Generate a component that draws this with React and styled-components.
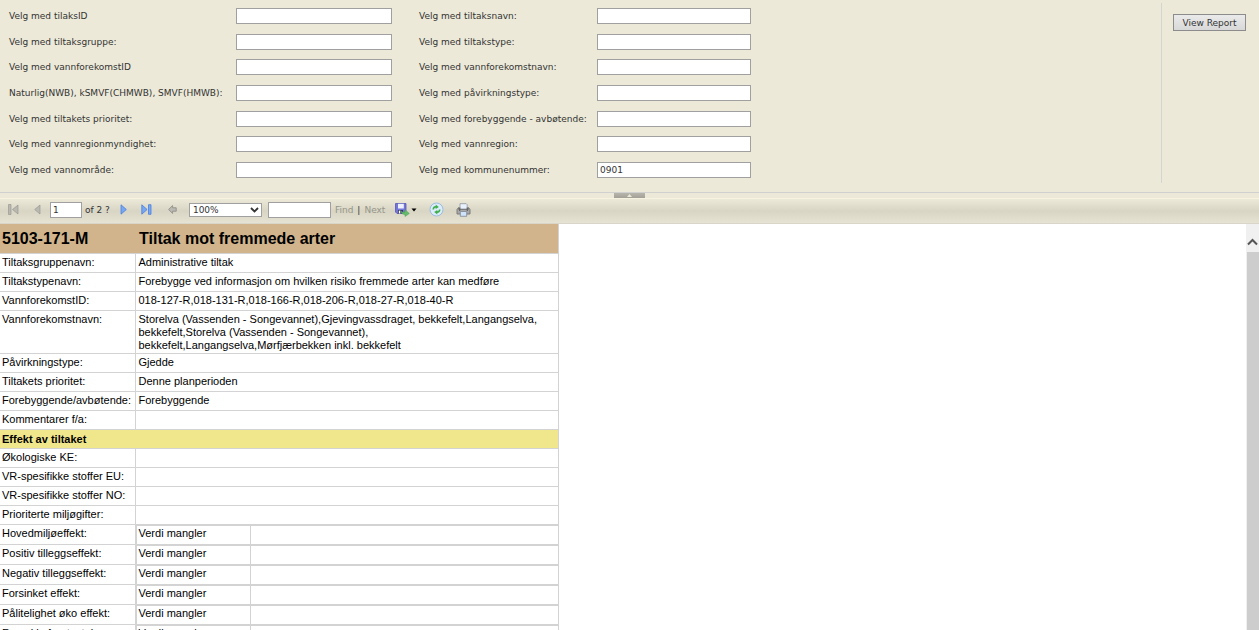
import { Fragment } from 'react';
import styled, { createGlobalStyle } from 'styled-components';

const GlobalStyle = createGlobalStyle`
  * {
    box-sizing: border-box;
  }

  body {
    margin: 0;
    font-family: Verdana, 'DejaVu Sans', sans-serif;
    font-size: 9px;
    color: #333;
    background-color: #fff;
  }

  input, select, button {
    font: inherit;
    color: inherit;
    border-radius: 0;
  }
`;

const Viewer = styled.div`
  display: flex;
  flex-direction: column;
  height: 100vh;
  overflow: hidden;
`;

const ParameterArea = styled.form`
  display: flex;
  flex: none;
  padding: 3px 13px 9px 8px;
  background-color: #ece9d8;
  border-bottom: 1px solid #d0d0d0;
`;

const ParameterGrid = styled.div`
  display: grid;
  flex: 1;
  grid-template-columns: 228px 156px 26px 179px 154px;
  grid-auto-rows: 1fr;
  align-items: center;
  min-height: 180px;
`;

const ParameterLabel = styled.label`
  grid-column: ${(props) => props.$column};
  padding-left: 1px;
  line-height: 12px;
  white-space: nowrap;
`;

const TextInput = styled.input`
  width: 100%;
  height: 16px;
  padding: 0 2px;
  border: 1px solid #a0a0a0;
  background-color: #fff;
  outline: none;
`;

const SubmitCell = styled.div`
  display: flex;
  align-items: flex-start;
  padding: 11px 0 0 11px;
  border-left: 1px solid #d4d4d0;
`;

const ReportButton = styled.button`
  width: 73px;
  height: 17px;
  padding: 0;
  border: 1px solid #8c8c8c;
  background: linear-gradient(#eaeaea, #d8d8d8);
  white-space: nowrap;
`;

const Splitter = styled.div`
  display: flex;
  flex: none;
  justify-content: center;
  height: 6px;
  background-color: #ece9d8;
  border-bottom: 1px solid #f6f3e0;
`;

const SplitterButton = styled.button`
  display: flex;
  align-items: center;
  justify-content: center;
  width: 31px;
  height: 5px;
  padding: 0;
  border: 0;
  background: linear-gradient(#b8b5ac, #a3a098);
`;

const Toolbar = styled.div`
  display: flex;
  flex: none;
  align-items: center;
  height: 25px;
  padding: 0 8px 3px;
  background: linear-gradient(#ece9d8, #d8d5c4 50%, #e6e3d4);
  border-bottom: 1px solid #d8d6c8;
`;

const ToolGroup = styled.div`
  display: flex;
  align-items: center;
  gap: ${(props) => props.$gap || 0}px;
  margin-right: ${(props) => props.$after || 0}px;
`;

const IconButton = styled.button`
  display: flex;
  align-items: center;
  padding: 0;
  border: 0;
  background: none;
`;

const ToolInput = styled(TextInput)`
  width: ${(props) => props.$width}px;
`;

const SelectBox = styled.div`
  display: grid;
  align-items: center;
  width: 73px;
  background-color: #fff;

  > * {
    grid-area: 1 / 1;
  }

  svg {
    justify-self: end;
    margin-right: 3px;
    pointer-events: none;
  }
`;

const ZoomSelect = styled.select`
  width: 100%;
  height: 14px;
  padding: 0 3px;
  border: 1px solid #a0a0a0;
  background: none;
  appearance: none;
`;

const FindLink = styled.a`
  color: #969589;
  text-decoration: none;
`;

const ReportPane = styled.div`
  display: flex;
  flex: 1;
  min-height: 0;
`;

const ReportBody = styled.main`
  flex: 1;
  overflow: hidden;
`;

const ReportTable = styled.table`
  width: 559px;
  table-layout: fixed;
  border-collapse: collapse;
  font-family: Arial, 'Liberation Sans', sans-serif;
  font-size: 11px;
  line-height: 13px;
  color: #000;
`;

const LabelColumn = styled.col`
  width: 135px;
`;

const ReportTitle = styled.th`
  height: 29px;
  padding: 1px 2px 0;
  background-color: #d2b48c;
  font-size: 16px;
  line-height: 18px;
  text-align: left;

  & + & {
    padding-left: 4px;
    border-right: 1px solid #d3d3d3;
  }
`;

const NameCell = styled.th`
  height: ${(props) => (props.$nested ? 20 : 19)}px;
  padding: 2px 0 1px 2px;
  border: 1px solid #d3d3d3;
  border-left: 0;
  font-weight: normal;
  text-align: left;
  vertical-align: top;
  white-space: nowrap;
`;

const ValueCell = styled.td`
  padding: ${(props) => (props.$nested ? '0' : '2px 2px 1px 3px')};
  border: 1px solid #d3d3d3;
  vertical-align: top;
`;

const SectionCell = styled.th`
  height: 19px;
  padding: 2px 2px 1px;
  border: 1px solid #d3d3d3;
  border-left: 0;
  background-color: #f0e68c;
  text-align: left;
`;

const EffectValue = styled.div`
  display: grid;
  grid-template-columns: 114px 1fr;
  height: 19px;
  border-top: 1px solid #d3d3d3;
  border-left: 1px solid #d3d3d3;

  span {
    padding: 1px 2px;
  }

  span:first-child {
    border-right: 1px solid #d3d3d3;
  }
`;

const ScrollTrack = styled.div`
  display: flex;
  flex: none;
  flex-direction: column;
  width: 13px;
  background-color: #f0f0f0;
`;

const ScrollArrow = styled.button`
  display: flex;
  flex: none;
  align-items: center;
  justify-content: center;
  height: 28px;
  padding: 7px 0 0;
  border: 0;
  background: none;
`;

const ScrollThumb = styled.div`
  flex: 1;
  margin-left: 1px;
  background-color: #cdcdcd;
`;

const parameters = [
  [{ label: 'Velg med tilaksID' }, { label: 'Velg med tiltaksnavn:' }],
  [{ label: 'Velg med tiltaksgruppe:' }, { label: 'Velg med tiltakstype:' }],
  [{ label: 'Velg med vannforekomstID' }, { label: 'Velg med vannforekomstnavn:' }],
  [{ label: 'Naturlig(NWB), kSMVF(CHMWB), SMVF(HMWB):' }, { label: 'Velg med påvirkningstype:' }],
  [{ label: 'Velg med tiltakets prioritet:' }, { label: 'Velg med forebyggende - avbøtende:' }],
  [{ label: 'Velg med vannregionmyndighet:' }, { label: 'Velg med vannregion:' }],
  [{ label: 'Velg med vannområde:' }, { label: 'Velg med kommunenummer:', value: '0901' }],
];

const details = [
  ['Tiltaksgruppenavn:', 'Administrative tiltak'],
  ['Tiltakstypenavn:', 'Forebygge ved informasjon om hvilken risiko fremmede arter kan medføre'],
  ['VannforekomstID:', '018-127-R,018-131-R,018-166-R,018-206-R,018-27-R,018-40-R'],
  [
    'Vannforekomstnavn:',
    'Storelva (Vassenden - Songevannet),Gjevingvassdraget, bekkefelt,Langangselva, bekkefelt,Storelva (Vassenden - Songevannet), bekkefelt,Langangselva,Mørfjærbekken inkl. bekkefelt',
  ],
  ['Påvirkningstype:', 'Gjedde'],
  ['Tiltakets prioritet:', 'Denne planperioden'],
  ['Forebyggende/avbøtende:', 'Forebyggende'],
  ['Kommentarer f/a:', ''],
];

const substances = [
  'Økologiske KE:',
  'VR-spesifikke stoffer EU:',
  'VR-spesifikke stoffer NO:',
  'Prioriterte miljøgifter:',
];

const effects = [
  'Hovedmiljøeffekt:',
  'Positiv tilleggseffekt:',
  'Negativ tilleggseffekt:',
  'Forsinket effekt:',
  'Pålitelighet øko effekt:',
  'Forenkla forutsetning:',
];

function FirstIcon() {
  return (
    <svg width="11" height="11" viewBox="0 0 11 11" fill="#b9b8b1" stroke="#92918b" strokeWidth="0.6">
      <path d="M.5 .5h2.5v10H.5zM10 1v9L4.5 5.5z" />
    </svg>
  );
}

function PreviousIcon() {
  return (
    <svg width="7" height="11" viewBox="0 0 7 11">
      <path d="M6 1v9L.7 5.5z" fill="#b9b8b1" stroke="#92918b" strokeWidth="0.6" />
    </svg>
  );
}

function NextIcon() {
  return (
    <svg width="7" height="11" viewBox="0 0 7 11">
      <path d="M1 .8v9.400l5.300-4.700z" fill="#78a8f4" stroke="#4a7edb" strokeWidth="0.8" />
    </svg>
  );
}

function LastIcon() {
  return (
    <svg width="11" height="11" viewBox="0 0 11 11" fill="#78a8f4" stroke="#4a7edb" strokeWidth="0.8">
      <path d="M.8 .8v9.400l5.300-4.700zM7.500 .7h2.500v9.600H7.500z" />
    </svg>
  );
}

function BackIcon() {
  return (
    <svg width="9" height="9" viewBox="0 0 9 9">
      <path d="M.6 4.500L4.600 .6v2.200h3.600v3.400H4.600v2.200z" fill="#bab9b2" stroke="#96958e" strokeWidth="1" />
    </svg>
  );
}

function ExportIcon() {
  return (
    <svg width="15" height="14" viewBox="0 0 15 14">
      <path d="M.5 .5h10.500v10H2L.5 9z" fill="#7376d6" stroke="#5557b5" strokeWidth="0.8" />
      <path d="M3 .8h5.800v4.700H3z" fill="#edf1ff" />
      <path d="M3 7h5v3.500H3z" fill="#33345f" />
      <path d="M3.800 7.600h1.500v2.900H3.800z" fill="#fff" />
      <path d="M6 7.700c1 1.400 2 1.700 4 1.500V6.800l4.300 3.700-4.300 3v-2.100C7.300 11.400 6 10.200 6 7.700z" fill="#66bd69" stroke="#469c51" strokeWidth="0.5" />
    </svg>
  );
}

function RefreshIcon() {
  return (
    <svg width="15" height="15" viewBox="0 0 15 15">
      <circle cx="7.500" cy="7.500" r="6.500" fill="#dcecfb" stroke="#9bbce2" />
      <path d="M3.500 7.500c0-2.300 1.400-3.400 3.200-3.400V2.400L9.800 4.900 6.700 7.100V5.800c-1 0-1.600.6-1.600 1.700z" fill="#3fae4c" />
      <path d="M11.500 7.500c0 2.300-1.400 3.400-3.200 3.400v1.700L5.200 10.100l3.100-2.200v1.300c1 0 1.600-.6 1.600-1.700z" fill="#3fae4c" />
    </svg>
  );
}

function PrintIcon() {
  return (
    <svg width="15" height="14" viewBox="0 0 15 14">
      <path d="M4 .7h6.200l1 1V6H4z" fill="#e8f1fc" stroke="#8c949f" strokeWidth="0.8" />
      <path d="M2.500 4.500L1 6.500v4.500h13V6.500l-1.500-2v2h-10z" fill="#aaa9a9" stroke="#747474" strokeWidth="0.9" />
      <path d="M3 4.500h1.300v3.500H3zM10.700 4.500H12v3.500h-1.300z" fill="#666" />
      <path d="M4.300 8.500h6.400v4.800H4.300z" fill="#cfe3fa" stroke="#7f8792" strokeWidth="0.8" />
    </svg>
  );
}

function Parameters() {
  return (
    <ParameterArea onSubmit={(e) => e.preventDefault()}>
      <ParameterGrid>
        {parameters.map((row, i) => (
          <Fragment key={row[0].label}>
            {row.map((field, j) => (
              <Fragment key={field.label}>
                <ParameterLabel htmlFor={`param-${i}-${j}`} $column={j === 0 ? 1 : 4}>
                  {field.label}
                </ParameterLabel>
                <TextInput id={`param-${i}-${j}`} type="text" defaultValue={field.value} />
              </Fragment>
            ))}
          </Fragment>
        ))}
      </ParameterGrid>
      <SubmitCell>
        <ReportButton type="submit">View Report</ReportButton>
      </SubmitCell>
    </ParameterArea>
  );
}

function ReportToolbar() {
  return (
    <Toolbar>
      <ToolGroup $gap={15} $after={9}>
        <IconButton aria-label="First Page"><FirstIcon /></IconButton>
        <IconButton aria-label="Previous Page"><PreviousIcon /></IconButton>
      </ToolGroup>
      <ToolGroup $gap={3} $after={10}>
        <ToolInput type="text" aria-label="Current Page" defaultValue="1" $width={32} />
        <span>of 2 ?</span>
      </ToolGroup>
      <ToolGroup $gap={14} $after={16}>
        <IconButton aria-label="Next Page"><NextIcon /></IconButton>
        <IconButton aria-label="Last Page"><LastIcon /></IconButton>
      </ToolGroup>
      <ToolGroup $after={12}>
        <IconButton aria-label="Back to Parent Report"><BackIcon /></IconButton>
      </ToolGroup>
      <ToolGroup $after={6}>
        <SelectBox>
          <ZoomSelect aria-label="Zoom" defaultValue="100%">
            <option>100%</option>
          </ZoomSelect>
          <svg width="9" height="6" viewBox="0 0 9 6">
            <path d="M1 1l3.500 3.500L8 1" fill="none" stroke="#333" strokeWidth="1.800" />
          </svg>
        </SelectBox>
      </ToolGroup>
      <ToolGroup $gap={4} $after={10}>
        <ToolInput type="text" aria-label="Find Text" $width={63} />
        <FindLink href="#find">Find</FindLink>
        <span>|</span>
        <FindLink href="#next">Next</FindLink>
      </ToolGroup>
      <ToolGroup $gap={12}>
        <IconButton aria-label="Export">
          <ExportIcon />
          <svg width="7" height="4" viewBox="0 0 7 4">
            <path d="M1.500 .5h5L4 3.500z" fill="#000" />
          </svg>
        </IconButton>
        <IconButton aria-label="Refresh"><RefreshIcon /></IconButton>
        <IconButton aria-label="Print"><PrintIcon /></IconButton>
      </ToolGroup>
    </Toolbar>
  );
}

function Report() {
  return (
    <ReportTable>
      <colgroup>
        <LabelColumn />
        <col />
      </colgroup>
      <thead>
        <tr>
          <ReportTitle>5103-171-M</ReportTitle>
          <ReportTitle>Tiltak mot fremmede arter</ReportTitle>
        </tr>
      </thead>
      <tbody>
        {details.map(([name, value]) => (
          <tr key={name}>
            <NameCell scope="row">{name}</NameCell>
            <ValueCell>{value}</ValueCell>
          </tr>
        ))}
        <tr>
          <SectionCell colSpan={2}>Effekt av tiltaket</SectionCell>
        </tr>
        {substances.map((name) => (
          <tr key={name}>
            <NameCell scope="row">{name}</NameCell>
            <ValueCell />
          </tr>
        ))}
        {effects.map((name) => (
          <tr key={name}>
            <NameCell scope="row" $nested>{name}</NameCell>
            <ValueCell $nested>
              <EffectValue>
                <span>Verdi mangler</span>
                <span />
              </EffectValue>
            </ValueCell>
          </tr>
        ))}
      </tbody>
    </ReportTable>
  );
}

function App() {
  return (
    <>
      <GlobalStyle />
      <Viewer>
        <Parameters />
        <Splitter>
          <SplitterButton aria-label="Hide Parameters">
            <svg width="5" height="3" viewBox="0 0 5 3">
              <path d="M0 3L2.500 0 5 3z" fill="#ece9d8" />
            </svg>
          </SplitterButton>
        </Splitter>
        <ReportToolbar />
        <ReportPane>
          <ReportBody>
            <Report />
          </ReportBody>
          <ScrollTrack>
            <ScrollArrow aria-label="Scroll up">
              <svg width="11" height="8" viewBox="0 0 11 8">
                <path d="M1 6.500l4.500-4.500L10 6.500" fill="none" stroke="#555" strokeWidth="2" />
              </svg>
            </ScrollArrow>
            <ScrollThumb />
          </ScrollTrack>
        </ReportPane>
      </Viewer>
    </>
  );
}

export default App;
